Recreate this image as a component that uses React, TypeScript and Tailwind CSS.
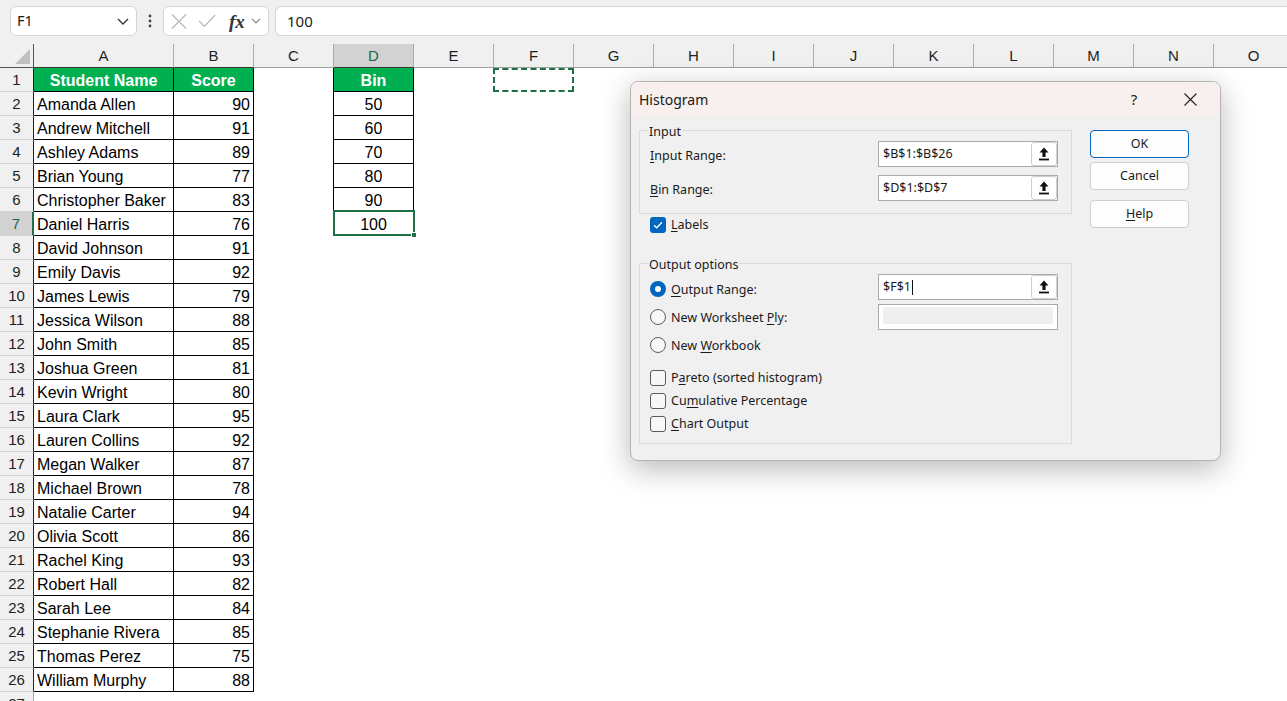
import React from 'react';

const students: [string, number][] = [
  ['Amanda Allen', 90], ['Andrew Mitchell', 91], ['Ashley Adams', 89], ['Brian Young', 77],
  ['Christopher Baker', 83], ['Daniel Harris', 76], ['David Johnson', 91], ['Emily Davis', 92],
  ['James Lewis', 79], ['Jessica Wilson', 88], ['John Smith', 85], ['Joshua Green', 81],
  ['Kevin Wright', 80], ['Laura Clark', 95], ['Lauren Collins', 92], ['Megan Walker', 87],
  ['Michael Brown', 78], ['Natalie Carter', 94], ['Olivia Scott', 86], ['Rachel King', 93],
  ['Robert Hall', 82], ['Sarah Lee', 84], ['Stephanie Rivera', 85], ['Thomas Perez', 75],
  ['William Murphy', 88],
];
const bins = [50, 60, 70, 80, 90, 100];
const restCols = ['E', 'F', 'G', 'H', 'I', 'J', 'K', 'L', 'M', 'N', 'O'];

function UploadBtn() {
  return (
    <div className="ml-auto mr-0 flex h-[24px] w-[26px] items-center justify-center rounded-[3px] border border-[#cfcfcf] bg-white">
      <svg width="10" height="14" viewBox="0 0 10 14">
        <path d="M5 0.5 L9.5 5.5 H6.6 V10 H3.4 V5.5 H0.5 Z" fill="#111" />
        <rect x="0" y="11.6" width="10" height="1.8" fill="#111" />
      </svg>
    </div>
  );
}

function TextBox({ children }: { children?: React.ReactNode }) {
  return (
    <div className="flex h-[26px] w-[180px] items-center border border-[#a9a9a9] bg-white pl-[4px]">
      <span className="text-[#1a1a1a]">{children}</span>
      <UploadBtn />
    </div>
  );
}

function Radio({ checked }: { checked?: boolean }) {
  return checked ? (
    <div className="flex h-[16px] w-[16px] shrink-0 items-center justify-center rounded-full bg-[#0067c0]">
      <div className="h-[6px] w-[6px] rounded-full bg-white" />
    </div>
  ) : (
    <div className="h-[16px] w-[16px] shrink-0 rounded-full border border-[#5c5c5c] bg-[#f7f7f7]" />
  );
}

function Check({ checked }: { checked?: boolean }) {
  return checked ? (
    <div className="flex h-[16px] w-[16px] shrink-0 items-center justify-center rounded-[3px] bg-[#0067c0]">
      <svg width="10" height="8" viewBox="0 0 10 8">
        <polyline points="1,4.2 3.7,6.8 9,1.2" fill="none" stroke="white" strokeWidth="1.3" />
      </svg>
    </div>
  ) : (
    <div className="h-[16px] w-[16px] shrink-0 rounded-[3px] border border-[#5c5c5c] bg-[#f7f7f7]" />
  );
}

function Dialog() {
  return (
    <div
      className="absolute left-[630px] top-[81px] h-[380px] w-[591px] overflow-hidden rounded-[8px] border border-[#b4b4b4] bg-[#f0f0f0] text-[12.5px] text-[#1a1a1a] shadow-[0_8px_30px_rgba(0,0,0,0.28)]"
      style={{ fontFamily: "'Noto Sans', sans-serif" }}
    >
      <div className="flex h-[35px] items-center bg-[#f8efef] pl-[8px] pr-[7px]">
        <span className="text-[14px]">Histogram</span>
        <div className="ml-auto flex h-[35px] w-[46px] items-center justify-center text-[15px]">?</div>
        <div className="ml-[10px] flex h-[35px] w-[46px] items-center justify-center">
          <svg width="13" height="13" viewBox="0 0 13 13">
            <path d="M0.5 0.5 L12.5 12.5 M12.5 0.5 L0.5 12.5" stroke="#222" strokeWidth="1.1" />
          </svg>
        </div>
      </div>
      <div className="flex pl-[8px] pt-[13px]">
        <div className="w-[433px]">
          <div className="relative h-[84px] border border-[#dadada] pt-[10px]">
            <span className="absolute -top-[8px] left-[8px] bg-[#f0f0f0] px-[1px] leading-[17px]">Input</span>
            <div className="flex h-[26px] items-center">
              <div className="w-[238px] pl-[10px] pt-[4px]">
                <span className="underline underline-offset-[2px]">I</span>nput Range:
              </div>
              <TextBox>$B$1:$B$26</TextBox>
            </div>
            <div className="mt-[8px] flex h-[26px] items-center">
              <div className="w-[238px] pl-[10px] pt-[4px]">
                <span className="underline underline-offset-[2px]">B</span>in Range:
              </div>
              <TextBox>$D$1:$D$7</TextBox>
            </div>
          </div>
          <div className="mt-[3px] flex h-[16px] items-center pl-[11px]">
            <Check checked />
            <span className="ml-[5px]">
              <span className="underline underline-offset-[2px]">L</span>abels
            </span>
          </div>
          <div className="relative mt-[30px] flex h-[181px] border border-[#dadada]">
            <span className="absolute -top-[8px] left-[8px] bg-[#f0f0f0] px-[1px] leading-[17px]">Output options</span>
            <div className="w-[238px] pl-[10px] pt-[17px]">
              <div className="flex h-[16px] items-center">
                <Radio checked />
                <span className="ml-[5px] pt-[2px]">
                  <span className="underline underline-offset-[2px]">O</span>utput Range:
                </span>
              </div>
              <div className="mt-[12px] flex h-[16px] items-center">
                <Radio />
                <span className="ml-[5px] pt-[2px]">
                  New Worksheet <span className="underline underline-offset-[2px]">P</span>ly:
                </span>
              </div>
              <div className="mt-[12px] flex h-[16px] items-center">
                <Radio />
                <span className="ml-[5px] pt-[2px]">
                  New <span className="underline underline-offset-[2px]">W</span>orkbook
                </span>
              </div>
              <div className="mt-[17px] flex h-[16px] items-center">
                <Check />
                <span className="ml-[5px]">
                  P<span className="underline underline-offset-[2px]">a</span>reto (sorted histogram)
                </span>
              </div>
              <div className="mt-[7px] flex h-[16px] items-center">
                <Check />
                <span className="ml-[5px]">
                  Cu<span className="underline underline-offset-[2px]">m</span>ulative Percentage
                </span>
              </div>
              <div className="mt-[7px] flex h-[16px] items-center">
                <Check />
                <span className="ml-[5px]">
                  <span className="underline underline-offset-[2px]">C</span>hart Output
                </span>
              </div>
            </div>
            <div className="w-[180px] pt-[10px]">
              <div className="flex h-[26px] w-[180px] items-center border border-[#a9a9a9] bg-white pl-[4px]">
                <span>$F$1</span>
                <span className="ml-[1px] h-[15px] w-[1px] bg-[#111]" />
                <UploadBtn />
              </div>
              <div className="mt-[4px] h-[26px] w-[180px] border border-[#a9a9a9] bg-white px-[4px] pt-[2px]">
                <div className="h-[17px] bg-[#efefef]" />
              </div>
            </div>
          </div>
        </div>
        <div className="ml-[18px] flex w-[99px] flex-col">
          <div className="flex h-[28px] items-center justify-center rounded-[4px] border border-[#0067c0] bg-[#fdfdfd]">OK</div>
          <div className="mt-[4px] flex h-[28px] items-center justify-center rounded-[4px] border border-[#cfcfcf] bg-[#fdfdfd]">Cancel</div>
          <div className="mt-[10px] flex h-[28px] items-center justify-center rounded-[4px] border border-[#cfcfcf] bg-[#fdfdfd]">
            <span>
              <span className="underline underline-offset-[2px]">H</span>elp
            </span>
          </div>
        </div>
      </div>
    </div>
  );
}

function FormulaBar() {
  return (
    <div className="flex h-[44px] items-start bg-[#f0f0f0] pt-[6px]" style={{ fontFamily: "'Noto Sans', sans-serif" }}>
      <div className="ml-[10px] flex h-[30px] w-[127px] items-center justify-between rounded-[6px] border border-[#d5d5d5] bg-white pl-[6px] pr-[7px]">
        <span className="text-[14.5px] text-[#1a1a1a]">F1</span>
        <svg width="12" height="7" viewBox="0 0 12 7">
          <polyline points="1,1 6,6 11,1" fill="none" stroke="#333" strokeWidth="1.3" />
        </svg>
      </div>
      <div className="flex h-[30px] w-[26px] items-center justify-center">
        <svg width="4" height="14" viewBox="0 0 4 14">
          <circle cx="2" cy="2" r="1.4" fill="#444" />
          <circle cx="2" cy="7" r="1.4" fill="#444" />
          <circle cx="2" cy="12" r="1.4" fill="#444" />
        </svg>
      </div>
      <div className="flex h-[30px] w-[106px] items-center rounded-[6px] border border-[#d5d5d5] bg-white pl-[7px]">
        <svg width="16" height="15" viewBox="0 0 16 15">
          <path d="M1 0.5 L15 14.5 M15 0.5 L1 14.5" stroke="#b8b8b8" strokeWidth="1.2" />
        </svg>
        <svg className="ml-[11px]" width="18" height="14" viewBox="0 0 18 14">
          <polyline points="1,7 6.5,12.5 17,1" fill="none" stroke="#b8b8b8" strokeWidth="1.2" />
        </svg>
        <span className="ml-[13px] text-[19px] italic leading-none text-[#333]" style={{ fontFamily: "'Liberation Serif', serif" }}>
          <span className="font-semibold">fx</span>
        </span>
        <svg className="ml-[6px]" width="10" height="6" viewBox="0 0 10 6">
          <polyline points="1,1 5,5 9,1" fill="none" stroke="#888" strokeWidth="1.1" />
        </svg>
      </div>
      <div className="ml-[6px] flex h-[30px] flex-1 items-center rounded-l-[6px] border border-r-0 border-[#d5d5d5] bg-white pl-[11px]">
        <span className="text-[15px] text-[#1a1a1a]">100</span>
      </div>
    </div>
  );
}

function HeaderRow() {
  return (
    <div className="flex h-[24px] bg-[#f0f0f0] text-[15px] text-[#1f1f1f]">
      <div className="relative w-[34px] shrink-0 border-b border-r border-b-[#555] border-r-[#555]">
        <svg className="absolute left-[14px] top-[5px]" width="17" height="15" viewBox="0 0 17 15">
          <polygon points="16,0 16,15 1,15" fill="#c0c0c0" />
        </svg>
      </div>
      <div className="flex w-[140px] shrink-0 items-center justify-center border-b border-r border-b-[#333] border-r-[#ababab] pt-[2px]">A</div>
      <div className="flex w-[80px] shrink-0 items-center justify-center border-b border-r border-b-[#333] border-r-[#ababab] pt-[2px]">B</div>
      <div className="flex w-[80px] shrink-0 items-center justify-center border-b border-r border-b-[#9e9e9e] border-r-[#ababab] pt-[2px]">C</div>
      <div className="flex w-[80px] shrink-0 items-center justify-center border-b border-r border-b-[#333] border-r-[#ababab] bg-[#d2d2d2] pt-[2px] text-[#0f6b3a]">D</div>
      {restCols.map((c) => (
        <div key={c} className="flex w-[80px] shrink-0 items-center justify-center border-b border-r border-b-[#9e9e9e] border-r-[#ababab] pt-[2px]">
          {c}
        </div>
      ))}
    </div>
  );
}

function DataRow({ r }: { r: number }) {
  const inTable = r <= 26;
  const inBin = r <= 7;
  const student = r >= 2 && r <= 26 ? students[r - 2] : null;
  const bin = r >= 2 && r <= 7 ? bins[r - 2] : null;
  const sel = r === 7;

  const rh = sel
    ? 'flex w-[34px] shrink-0 items-center justify-center border-b border-r-2 border-b-[#d6d6d6] border-r-[#1e7145] bg-[#d2d2d2] pt-[2px] text-[#0f6b3a]'
    : inTable
    ? 'flex w-[34px] shrink-0 items-center justify-center border-b border-r border-b-[#d6d6d6] border-r-[#222] bg-[#f0f0f0] pt-[2px] text-[#1f1f1f]'
    : 'flex w-[34px] shrink-0 items-center justify-center border-b border-r border-b-[#d6d6d6] border-r-[#ababab] bg-[#f0f0f0] pt-[2px] text-[#1f1f1f]';

  return (
    <div className="flex h-[24px] text-[16px] text-black">
      <div className={rh}><span className="text-[15px]">{r}</span></div>
      {r === 1 ? (
        <div className="flex w-[140px] shrink-0 items-center justify-center border-b border-r border-black bg-[#00b050] pt-[2px] font-bold text-white">Student Name</div>
      ) : inTable ? (
        <div className="flex w-[140px] shrink-0 items-center whitespace-nowrap border-b border-r border-black pl-[3px] pt-[2px]">{student?.[0]}</div>
      ) : (
        <div className="w-[140px] shrink-0" />
      )}
      {r === 1 ? (
        <div className="flex w-[80px] shrink-0 items-center justify-center border-b border-r border-black bg-[#00b050] pt-[2px] font-bold text-white">Score</div>
      ) : inTable ? (
        <div className="flex w-[80px] shrink-0 items-center justify-end border-b border-r border-black pr-[3px] pt-[2px]">{student?.[1]}</div>
      ) : (
        <div className="w-[80px] shrink-0" />
      )}
      {inBin ? <div className="w-[80px] shrink-0 border-r border-black" /> : <div className="w-[80px] shrink-0" />}
      {r === 1 ? (
        <div className="flex w-[80px] shrink-0 items-center justify-center border-b border-r border-black bg-[#00b050] pt-[2px] font-bold text-white">Bin</div>
      ) : inBin ? (
        <div className="relative flex w-[80px] shrink-0 items-center justify-center border-b border-r border-black pt-[2px]">
          {bin}
          {sel && (
            <div className="absolute -left-[1px] -top-[2px] h-[26px] w-[82px] border-2 border-[#1e7145]">
              <div className="absolute -bottom-[4px] -right-[4px] h-[6px] w-[6px] border border-white bg-[#1e7145]" />
            </div>
          )}
        </div>
      ) : (
        <div className="w-[80px] shrink-0" />
      )}
      <div className="w-[80px] shrink-0" />
      {r === 1 ? (
        <div className="relative w-[80px] shrink-0">
          <div className="absolute -left-[1px] top-0 h-[24px] w-[81px] border-2 border-dashed border-[#1e7145]" />
        </div>
      ) : (
        <div className="w-[80px] shrink-0" />
      )}
      {['G', 'H', 'I', 'J', 'K', 'L', 'M', 'N', 'O'].map((c) => (
        <div key={c} className="w-[80px] shrink-0" />
      ))}
    </div>
  );
}

export default function App() {
  const rows = Array.from({ length: 27 }, (_, i) => i + 1);
  return (
    <div className="relative h-[701px] w-[1287px] overflow-hidden bg-white">
      <FormulaBar />
      <div style={{ fontFamily: "'Liberation Sans', Arial, sans-serif" }}>
        <HeaderRow />
        {rows.map((r) => (
          <DataRow key={r} r={r} />
        ))}
      </div>
      <Dialog />
    </div>
  );
}
